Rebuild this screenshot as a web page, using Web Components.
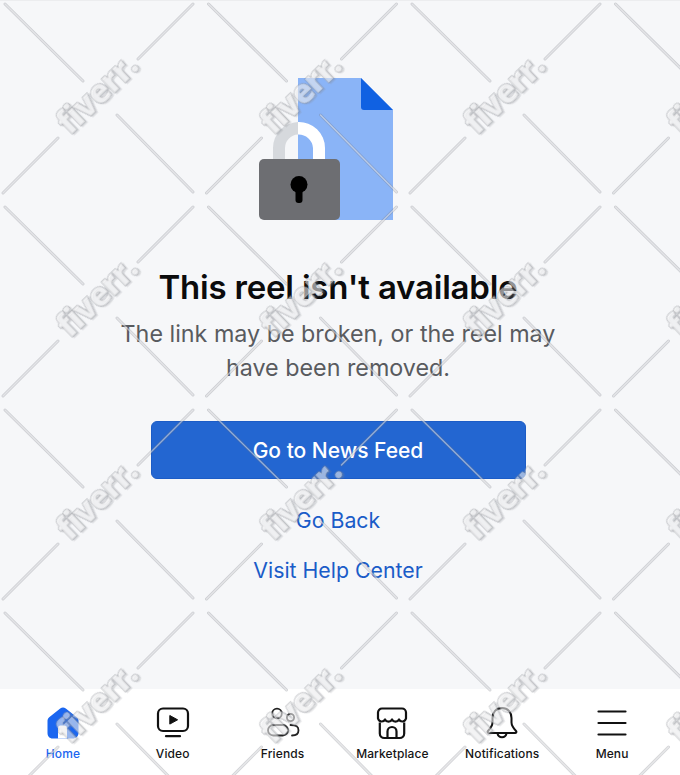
<!DOCTYPE html>
<html lang="en">
<head>
<meta charset="utf-8">
<title>This reel isn't available</title>
<style>
    html, body { margin: 0; padding: 0; }
    body { font-family: Inter, "Liberation Sans", sans-serif; background: #f6f7f9; }
</style>
</head>
<body>
<reel-page>
    <lock-art slot="art"></lock-art>
    <span slot="title">This reel isn't available</span>
    <span slot="message">The link may be broken, or the reel may<br>have been removed.</span>
    <action-button slot="actions">Go to News Feed</action-button>
    <text-link slot="actions" style="margin-top:28px">Go Back</text-link>
    <text-link slot="actions" style="margin-top:24px">Visit Help Center</text-link>

    <tab-bar slot="tabs">
        <tab-item active>
            <svg slot="icon" width="34" height="34" viewBox="0 0 34 34">
                <path fill="#1a66f0" d="M14.2 2.6a4.4 4.4 0 0 1 5.6 0l11 8.6a4.4 4.4 0 0 1 1.7 3.4v12.4c0 3.3-2.700 5.500-5.600 5.500H6.600c-2.900 0-5.100-2.200-5.100-5.500V14.600a4.400 4.400 0 0 1 1.700-3.400z"/>
                <path fill="#fff" d="M12 22c0-1.400 1-2.500 2.400-2.500h4.200c1.400 0 2.400 1.100 2.400 2.500v10.500h-9z"/>
            </svg>
            Home
        </tab-item>
        <tab-item>
            <svg slot="icon" width="34" height="34" viewBox="0 0 34 34" fill="none" stroke="#111" stroke-width="2.2">
                <rect x="2" y="2.500" width="30" height="22.500" rx="5"/>
                <path d="M10 30.200h14" stroke-linecap="round"/>
                <path d="M13.800 9.500l7.800 4.300-7.800 4.300z" fill="#111" stroke="#111" stroke-width="1" stroke-linejoin="round"/>
            </svg>
            Video
        </tab-item>
        <tab-item>
            <svg slot="icon" width="34" height="34" viewBox="0 0 34 34" fill="none" stroke="#222" stroke-width="1.800">
                <circle cx="11" cy="7.500" r="4.800"/>
                <circle cx="24.500" cy="11.500" r="3.600"/>
                <rect x="2" y="19" width="20" height="10.500" rx="5.200"/>
                <path d="M24.500 19c6 0 8 1.500 8 5.200s-2.400 5.300-6.500 5.300" stroke-linecap="round"/>
            </svg>
            Friends
        </tab-item>
        <tab-item>
            <svg slot="icon" width="34" height="34" viewBox="0 0 34 34" fill="none" stroke="#111" stroke-width="2.200" stroke-linejoin="round">
                <path d="M7 2.500h20a4 4 0 0 1 4 4v6c-1.200 3.800-5.500 3.800-7 1-1.500 2.800-5.500 2.800-7 0-1.500 2.800-5.500 2.800-7 0-1.500 2.800-5.800 2.800-7-1v-6a4 4 0 0 1 4-4z"/>
                <path d="M4.800 16.500v11a4.500 4.500 0 0 0 4.500 4.500h15.400a4.500 4.500 0 0 0 4.500-4.500v-11"/>
                <path d="M12.500 32v-6.500a4.500 4.500 0 0 1 9 0V32"/>
            </svg>
            Marketplace
        </tab-item>
        <tab-item>
            <svg slot="icon" width="34" height="34" viewBox="0 0 34 34" fill="none" stroke="#111" stroke-width="2" stroke-linejoin="round">
                <path d="M17 2c-6 0-9.500 4.500-9.500 10v4.500c0 3-1.800 5.500-4.500 8.500-.8.900-.3 2 .9 2h26.200c1.200 0 1.700-1.100.9-2-2.700-3-4.500-5.500-4.500-8.500V12C26.500 6.500 23 2 17 2z"/>
                <path d="M12.500 27.500a4.600 4.600 0 0 0 9 0"/>
            </svg>
            Notifications
        </tab-item>
        <tab-item>
            <svg slot="icon" width="34" height="34" viewBox="0 0 34 34" fill="none" stroke="#111" stroke-width="2.200" stroke-linecap="round">
                <path d="M3.500 5.500h27M3.500 17h27M3.500 28.500h27"/>
            </svg>
            Menu
        </tab-item>
    </tab-bar>
    <fiverr-overlay slot="overlay"></fiverr-overlay>
</reel-page>

<script>
// PAGE SHELL - error panel on top, tab bar at the bottom, watermark over everything
class ReelPage extends HTMLElement {
    connectedCallback() {
        const shadowRoot = this.attachShadow({ mode: 'open' });
        shadowRoot.innerHTML = `
        <style>
            :host { display: flex; flex-direction: column; position: relative; width: 680px; height: 775px; overflow: hidden; border-top: 1px solid #ecedef; box-sizing: border-box; }
            main { flex: 1; display: flex; flex-direction: column; align-items: center; padding: 77px 4px 0 0; text-align: center; }
            h1 { margin: 47px 0 0; font-size: 33px; line-height: 40px; font-weight: 600; color: #0b0b0c; letter-spacing: -0.2px; }
            p { margin: 10px 0 0; font-size: 23.3px; line-height: 34px; font-weight: 400; color: #595b5f; }
            .actions { display: flex; flex-direction: column; align-items: center; margin-top: 36px; }
        </style>
        <main>
            <slot name="art"></slot>
            <h1><slot name="title"></slot></h1>
            <p><slot name="message"></slot></p>
            <div class="actions"><slot name="actions"></slot></div>
        </main>
        <slot name="tabs"></slot>
        <slot name="overlay"></slot>
        `;
    }
}

// Padlock in front of a document that is cut down the middle
class LockArt extends HTMLElement {
    connectedCallback() {
        const shadowRoot = this.attachShadow({ mode: 'open' });
        shadowRoot.innerHTML = `
        <style>
            :host { display: block; width: 134px; height: 142px; margin-right: 24px; }
            svg { display: block; }
        </style>
        <svg width="134" height="142" viewBox="0 0 134 142">
            <path fill="#8ab4f7" d="M39 0h63l32 32v110H39z"/>
            <path fill="#1061e2" d="M102 0l32 32h-29a3 3 0 0 1-3-3z"/>
            <path fill="#d6d9dd" d="M39 44a26 26 0 0 0-25 26v14h12V70a13.500 13.500 0 0 1 13-13.500z"/>
            <path fill="#fff" d="M39 44a26 26 0 0 1 27 26v14H54V70a14.500 14.500 0 0 0-15-13.500z"/>
            <rect x="0" y="81" width="81" height="61" rx="5" fill="#6d6e72"/>
            <circle cx="40" cy="106.500" r="8.500" fill="#000"/>
            <rect x="36.500" y="108" width="7" height="17" rx="3" fill="#000"/>
        </svg>
        `;
    }
}

class ActionButton extends HTMLElement {
    connectedCallback() {
        const shadowRoot = this.attachShadow({ mode: 'open' });
        shadowRoot.innerHTML = `
        <style>
            :host { display: flex; align-items: center; justify-content: center; width: 375px; height: 58px; box-sizing: border-box; border-radius: 6px; background: #2366d1; border: 1px solid #1c5cc6; color: #fff; font-size: 21px; font-weight: 500; }
        </style>
        <slot></slot>
        `;
    }
}

class TextLink extends HTMLElement {
    connectedCallback() {
        const shadowRoot = this.attachShadow({ mode: 'open' });
        shadowRoot.innerHTML = `
        <style>
            :host { display: block; color: #1a5cc8; font-size: 21.3px; line-height: 26px; font-weight: 400; }
        </style>
        <slot></slot>
        `;
    }
}

class TabBar extends HTMLElement {
    connectedCallback() {
        const shadowRoot = this.attachShadow({ mode: 'open' });
        shadowRoot.innerHTML = `
        <style>
            :host { display: grid; grid-template-columns: repeat(6, 1fr); height: 86px; padding: 0 13px 0 8px; background: #fff; box-sizing: border-box; }
        </style>
        <slot></slot>
        `;
    }
}

class TabItem extends HTMLElement {
    connectedCallback() {
        const shadowRoot = this.attachShadow({ mode: 'open' });
        shadowRoot.innerHTML = `
        <style>
            :host { display: flex; flex-direction: column; align-items: center; padding-top: 17px; color: #151516; font-size: 12px; line-height: 15px; font-weight: 500; white-space: nowrap; letter-spacing: 0.1px; }
            :host([active]) { color: #1a66f0; }
            .icon { display: block; width: 34px; height: 34px; margin-bottom: 6px; }
        </style>
        <div class="icon"><slot name="icon"></slot></div>
        <slot></slot>
        `;
    }
}

// Repeated watermark tile: four lines and the word, drawn as an overlay
class FiverrOverlay extends HTMLElement {
    connectedCallback() {
        const shadowRoot = this.attachShadow({ mode: 'open' });
        const lines = [[5, 3, 83, 80], [193, 3, 138, 58], [117, 114, 193, 191], [58, 137, 3, 192]];
        let tiles = '';
        for (let row = 0; row < 4; row++) {
            for (let col = 0; col < 4; col++) {
                const x = col * 203.5;
                const y = row * 203;
                for (const l of lines) {
                    const d = `M${x + l[0]} ${y + l[1]}L${x + l[2]} ${y + l[3]}`;
                    tiles += `<path d="${d}" class="edge"/><path d="${d}" class="core"/>`;
                }
                tiles += `<text x="0" y="0" transform="translate(${x + 70} ${y + 135}) rotate(-44)">fiverr.</text>`;
            }
        }
        shadowRoot.innerHTML = `
        <style>
            :host { display: block; position: absolute; inset: 0; pointer-events: none; }
            svg { display: block; }
            .edge { stroke: rgba(110,114,124,.3); stroke-width: 3; stroke-linecap: round; }
            .core { stroke: rgba(255,255,255,.45); stroke-width: 1.4; stroke-linecap: round; }
            text { font-family: "Open Sans", sans-serif; font-size: 33px; font-weight: 800; letter-spacing: -1.2px; fill: rgba(255,255,255,.5); stroke: rgba(130,133,140,.42); stroke-width: 1.4px; paint-order: stroke; filter: drop-shadow(1.500px 2px 0.6px rgba(130,133,140,.4)); }
        </style>
        <svg width="680" height="775" viewBox="0 0 680 775" fill="none">${tiles}</svg>
        `;
    }
}

customElements.define('reel-page', ReelPage);
customElements.define('lock-art', LockArt);
customElements.define('action-button', ActionButton);
customElements.define('text-link', TextLink);
customElements.define('tab-bar', TabBar);
customElements.define('tab-item', TabItem);
customElements.define('fiverr-overlay', FiverrOverlay);
</script>
</body>
</html>
